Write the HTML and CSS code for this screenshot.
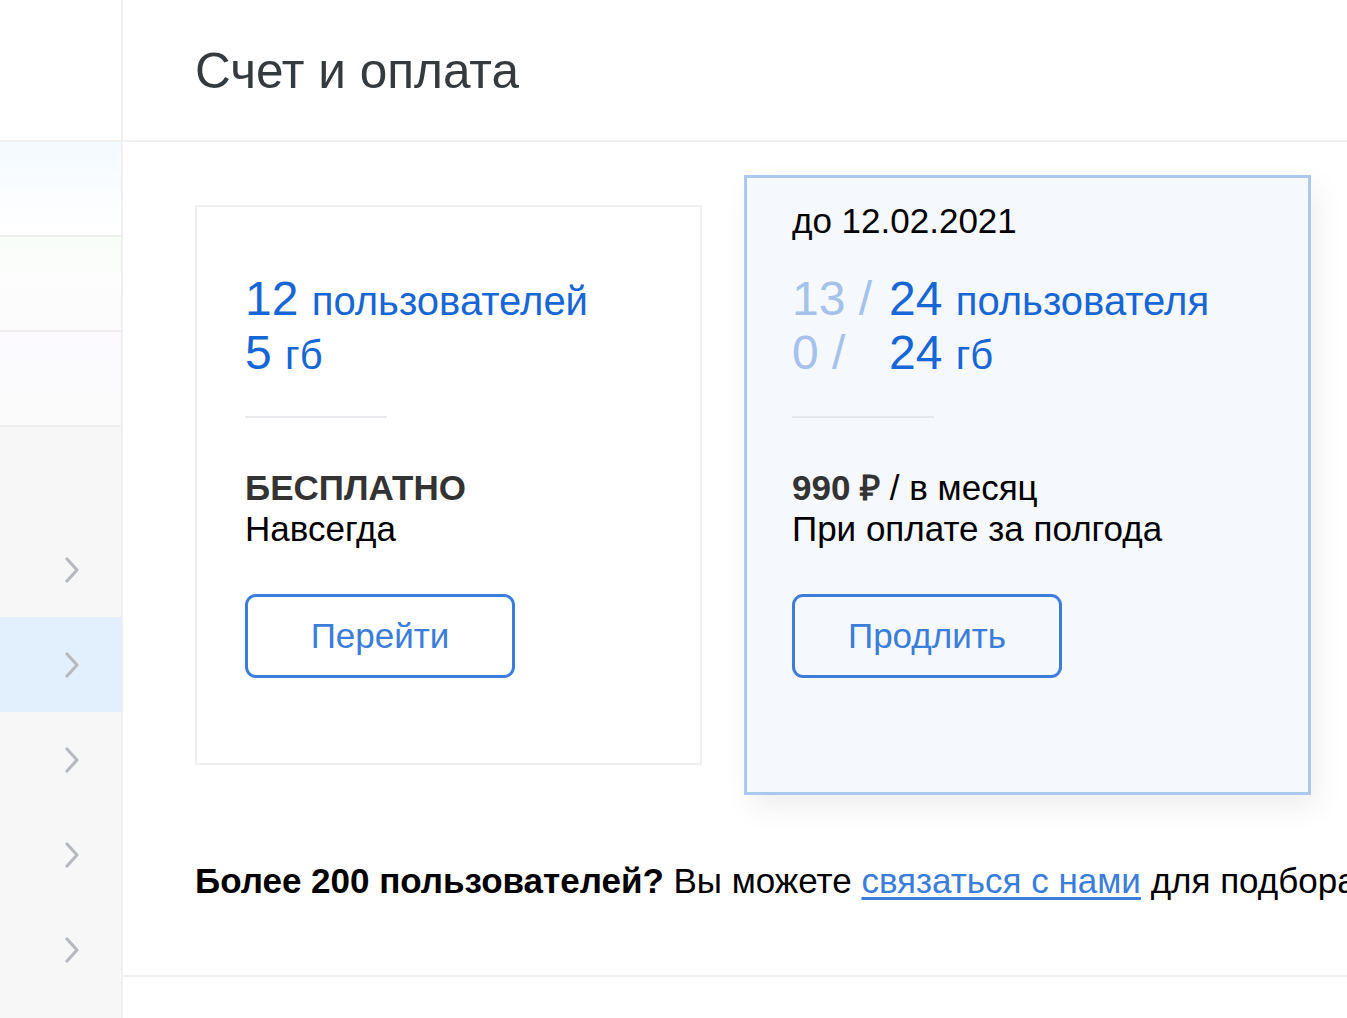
FILE: index.html
```html
<!DOCTYPE html>
<html lang="ru">
<head>
<meta charset="utf-8">
<title>Счет и оплата</title>
<link rel="stylesheet" href="styles.css">
</head>
<body>
<div class="app">
  <aside class="sidebar">
    <div class="side-top"></div>
    <div class="side-promo promo-blue"></div>
    <div class="side-promo promo-green"></div>
    <div class="side-promo promo-pink"></div>
    <div class="side-item"></div>
    <div class="side-item"><svg class="chev" viewBox="0 0 14 26" width="14" height="26"><polyline points="2,2 12,13 2,24"/></svg></div>
    <div class="side-item active"><svg class="chev" viewBox="0 0 14 26" width="14" height="26"><polyline points="2,2 12,13 2,24"/></svg></div>
    <div class="side-item"><svg class="chev" viewBox="0 0 14 26" width="14" height="26"><polyline points="2,2 12,13 2,24"/></svg></div>
    <div class="side-item"><svg class="chev" viewBox="0 0 14 26" width="14" height="26"><polyline points="2,2 12,13 2,24"/></svg></div>
    <div class="side-item"><svg class="chev" viewBox="0 0 14 26" width="14" height="26"><polyline points="2,2 12,13 2,24"/></svg></div>
  </aside>
  <main class="main">
    <header class="header">
      <h1 class="title">Счет и оплата</h1>
    </header>
    <section class="content">
      <div class="plans">
        <div class="card card-free">
          <div class="stats">
            <div class="stat"><span class="num">12</span> <span class="unit">пользователей</span></div>
            <div class="stat"><span class="num">5</span> <span class="unit">гб</span></div>
          </div>
          <div class="divider"></div>
          <div class="price">
            <div class="price-main"><b>БЕСПЛАТНО</b></div>
            <div class="price-sub">Навсегда</div>
          </div>
          <button class="btn">Перейти</button>
        </div>
        <div class="card card-current">
          <div class="date">до 12.02.2021</div>
          <div class="stats">
            <div class="stat"><span class="used">13 /</span><span class="num">24</span> <span class="unit">пользователя</span></div>
            <div class="stat"><span class="used">0 /</span><span class="num">24</span> <span class="unit">гб</span></div>
          </div>
          <div class="divider"></div>
          <div class="price">
            <div class="price-main"><b>990 ₽</b> / в месяц</div>
            <div class="price-sub">При оплате за полгода</div>
          </div>
          <button class="btn">Продлить</button>
        </div>
      </div>
      <p class="more"><b>Более 200 пользователей?</b> Вы можете <a href="#" class="link">связаться с нами</a> для подбора тарифа.</p>
    </section>
  </main>
</div>
</body>
</html>
```
FILE: styles.css
```css
* { box-sizing: border-box; }
html, body { margin: 0; padding: 0; }
body {
  width: 1347px;
  height: 1018px;
  overflow: hidden;
  background: #fff;
  font-family: "Liberation Sans", Arial, sans-serif;
  color: #000;
}
.app {
  display: flex;
  height: 1018px;
}
.sidebar {
  width: 123px;
  flex: none;
  background: #f7f7f7;
  border-right: 2px solid #f0f0f0;
  display: flex;
  flex-direction: column;
}
.side-top {
  height: 142px;
  background: #fff;
  border-bottom: 2px solid #efefef;
  flex: none;
}
.side-promo {
  height: 95px;
  flex: none;
  border-bottom: 2px solid #efefef;
}
.promo-blue { background: linear-gradient(180deg, #f3f9ff 0%, #fbfdff 60%, #fff 100%); }
.promo-green { background: linear-gradient(180deg, #f9fdf8 0%, #fcfdfc 40%, #fcfcfc 100%); }
.promo-pink { background: linear-gradient(180deg, #fcfaff 0%, #fbfbfd 50%, #fbfbfb 100%); }
.side-item {
  height: 95px;
  flex: none;
  display: flex;
  align-items: center;
  justify-content: flex-end;
  padding-right: 42px;
}
.side-item.active { background: #e2f0fd; }
.chev polyline {
  fill: none;
  stroke: #b6babf;
  stroke-width: 3.2;
  stroke-linecap: round;
  stroke-linejoin: round;
}
.main {
  flex: 1;
  min-width: 0;
  display: flex;
  flex-direction: column;
}
.header {
  height: 142px;
  border-bottom: 2px solid #f0f0f0;
  padding-left: 72px;
  flex: none;
}
.title {
  margin: 0;
  padding-top: 44px;
  font-weight: normal;
  font-size: 49.5px;
  line-height: 54px;
  color: #353a3f;
}
.content {
  padding-left: 72px;
  border-bottom: 2px solid #f0f0f0;
  flex: none;
}
.plans {
  display: flex;
  align-items: center;
  padding-top: 33px;
}
.card {
  display: flex;
  flex-direction: column;
  align-items: flex-start;
}
.card-free {
  width: 507px;
  height: 560px;
  border: 2px solid #f0f0f0;
  background: #fff;
  padding: 65px 48px 0;
}
.card-current {
  margin-left: 42px;
  width: 567px;
  height: 620px;
  border: 3px solid #a9c9ef;
  background: #f5f8fd;
  padding: 22px 45px 0;
  box-shadow: 6px 12px 28px rgba(0, 0, 0, 0.07);
}
.date {
  font-size: 35px;
  line-height: 42px;
  color: #000;
  margin-bottom: 30px;
}
.stats {
  font-size: 48px;
  line-height: 54px;
  color: #1766d6;
}
.stat { white-space: nowrap; }
.unit {
  font-size: 40px;
  line-height: 1;
}
.used {
  display: inline-block;
  width: 97px;
  color: #a4c2eb;
}
.divider {
  width: 142px;
  height: 2px;
  background: #e6e8eb;
  margin-top: 36px;
}
.price {
  margin-top: 49px;
  font-size: 35px;
  line-height: 41px;
  white-space: nowrap;
}
.price b { color: #333; }
.price-sub { color: #000; }
.btn {
  margin-top: 45px;
  width: 270px;
  height: 84px;
  border: 3px solid #3b7ddb;
  border-radius: 11px;
  background: transparent;
  color: #3b7ddb;
  font-family: "Liberation Sans", Arial, sans-serif;
  font-size: 35px;
  padding: 0;
}
.more {
  margin: 65px 0 0;
  padding-bottom: 74px;
  font-size: 35px;
  line-height: 41px;
  white-space: nowrap;
  color: #000;
}
.link {
  color: #3b7ddb;
  text-decoration: underline;
  text-decoration-thickness: 3px;
  text-underline-offset: 4px;
}
```
